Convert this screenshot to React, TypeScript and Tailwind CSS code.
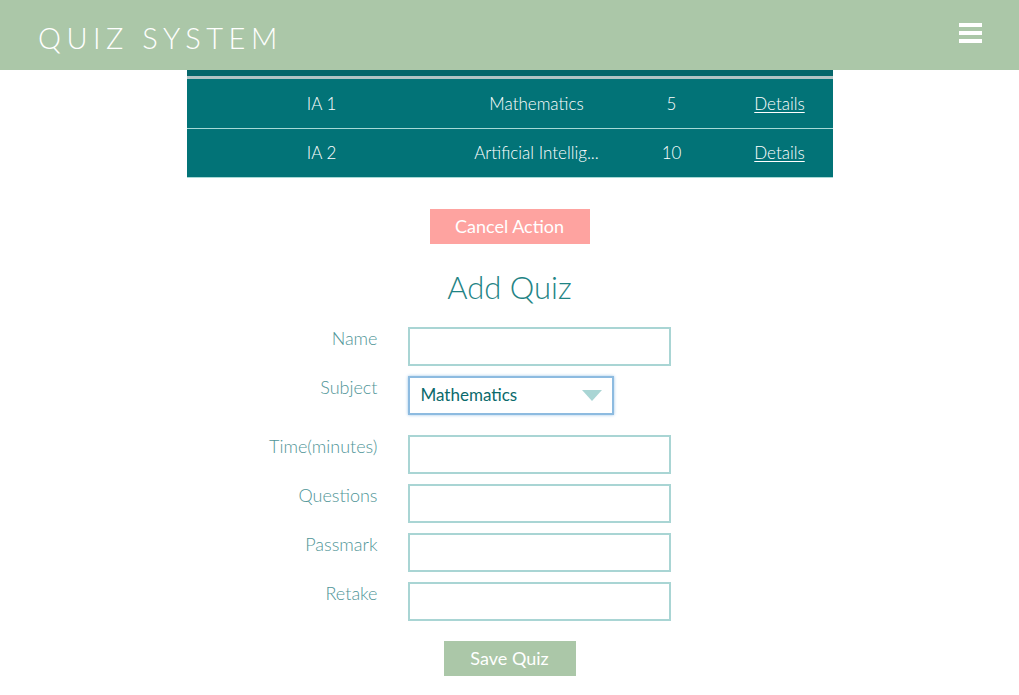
import React from 'react';

const quizzes = [
  { name: 'IA 1', subject: 'Mathematics', questions: 5 },
  { name: 'IA 2', subject: 'Artificial Intellig...', questions: 10 },
];

const fields = ['Name', 'Subject', 'Time(minutes)', 'Questions', 'Passmark', 'Retake'];

const App: React.FC = () => {
  return (
    <div className="min-h-screen bg-white font-['Lato','Open_Sans',sans-serif] font-light">
      {/* Top bar */}
      <header className="h-[70px] bg-[#abc7a8] flex items-center justify-between pl-[38px] pr-[37px]">
        <h1 className="text-[29px] font-light tracking-[0.19em] text-white pt-[6px]">QUIZ SYSTEM</h1>
        <div className="flex flex-col gap-[4px] mb-[4px]">
          <span className="block w-[23px] h-[4px] bg-white" />
          <span className="block w-[23px] h-[4px] bg-white" />
          <span className="block w-[23px] h-[4px] bg-white" />
        </div>
      </header>

      {/* Quiz table */}
      <div className="w-[646px] mx-auto">
        <div className="h-[6px] bg-[#05666a]" />
        <div className="h-[3px] bg-[#b3c4c4]" />
        <table className="w-full text-white text-[17px] bg-[#027377]">
          <tbody>
            {quizzes.map((q) => (
              <tr key={q.name} className="border-b border-[#a7d9d6]">
                <td className="h-[49px] w-[270px] text-center">{q.name}</td>
                <td className="w-[160px] text-center">{q.subject}</td>
                <td className="w-[110px] text-center">{q.questions}</td>
                <td className="text-center">
                  <a href="#" className="underline underline-offset-2">Details</a>
                </td>
              </tr>
            ))}
          </tbody>
        </table>
      </div>

      <div className="flex flex-col items-center">
        <button className="mt-[31px] w-[160px] h-[35px] bg-[#fea3a0] text-white text-[18px] font-normal">
          Cancel Action
        </button>
        <h2 className="mt-[23px] text-[31px] font-light text-[#1f8485] leading-[40px]">Add Quiz</h2>

        <form className="mt-[20px] w-[646px] flex flex-col">
          {fields.map((f) => (
            <div key={f} className={`flex items-start ${f === 'Subject' ? 'mb-[20px]' : 'mb-[10px]'}`}>
              <label className="w-[221px] text-right text-[18px] text-[#4f9597] pr-[30px] leading-[22px]">
                {f}
              </label>
              {f === 'Subject' ? (
                <div className="w-[206px] h-[39px] border-2 border-[#8dbbe0] shadow-[0_0_3px_#9cc4e6] flex items-center justify-between pl-[11px] pr-[10px] text-[17px] text-[#0a6a6c] font-normal">
                  <span>Mathematics</span>
                  <span className="w-0 h-0 border-l-[10px] border-r-[10px] border-t-[11px] border-l-transparent border-r-transparent border-t-[#a9d5d4]" />
                </div>
              ) : (
                <input className="w-[263px] h-[39px] border-2 border-[#a9d5d4] outline-none" />
              )}
            </div>
          ))}
        </form>

        <button className="mt-[10px] w-[132px] h-[35px] bg-[#abc7a8] text-white text-[18px] font-normal">
          Save Quiz
        </button>
      </div>
    </div>
  );
};

export default App;
